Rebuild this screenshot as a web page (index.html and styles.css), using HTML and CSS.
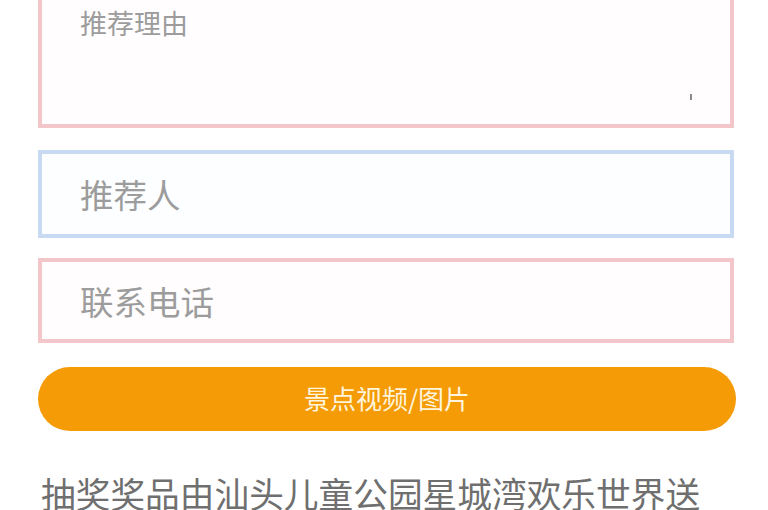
FILE: index.html
```html
<!DOCTYPE html>
<html lang="zh-CN">
<head>
<meta charset="utf-8">
<title>推荐表单</title>
<link rel="stylesheet" href="styles.css">
</head>
<body>
<main class="form">
  <div class="field field-area">
    <span class="placeholder placeholder-small">推荐理由</span>
    <span class="grip"></span>
  </div>
  <div class="field field-line field-blue">
    <span class="placeholder">推荐人</span>
  </div>
  <div class="field field-line field-short">
    <span class="placeholder">联系电话</span>
  </div>
  <button class="upload-btn" type="button">景点视频/图片</button>
  <p class="note">抽奖奖品由汕头儿童公园星城湾欢乐世界送</p>
</main>
</body>
</html>
```

FILE: styles.css
```css
html, body {
  margin: 0;
  padding: 0;
  background: #ffffff;
  overflow: hidden;
}

body {
  font-family: "Noto Sans CJK SC", "Noto Sans", sans-serif;
  width: 768px;
  height: 510px;
}

.form {
  display: flex;
  flex-direction: column;
  width: 696px;
  margin-left: 38px;
}

.field {
  box-sizing: border-box;
  border: 4px solid #f3c7c9;
  background: #fffdfd;
  padding-left: 38px;
}

.field-area {
  position: relative;
  height: 150px;
  margin-top: -22px;
  padding-top: 27px;
}

.field-line {
  display: flex;
  align-items: center;
  height: 88px;
  margin-top: 22px;
}

.field-short {
  height: 85px;
  margin-top: 20px;
}

.field-blue {
  border-color: #c8daf2;
  background: #fdfeff;
}

.placeholder {
  color: #9c9c9c;
  font-size: 33.5px;
  line-height: 36px;
}

.placeholder-small {
  display: block;
  font-size: 27px;
  line-height: 27px;
}

.grip {
  position: absolute;
  right: 38px;
  bottom: 24px;
  width: 2px;
  height: 6px;
  background: #8a8a8a;
}

.upload-btn {
  margin-top: 24px;
  width: 698px;
  height: 64px;
  border: none;
  border-radius: 32px;
  background: #f49b06;
  color: #fff4dc;
  font-family: "Noto Sans CJK SC", "Noto Sans", sans-serif;
  font-size: 26px;
  padding: 0 0 4px 0;
  cursor: pointer;
}

.note {
  margin: 42px 0 0 3px;
  color: #6f6f6f;
  font-size: 34.7px;
  line-height: 40px;
  white-space: nowrap;
}
```
